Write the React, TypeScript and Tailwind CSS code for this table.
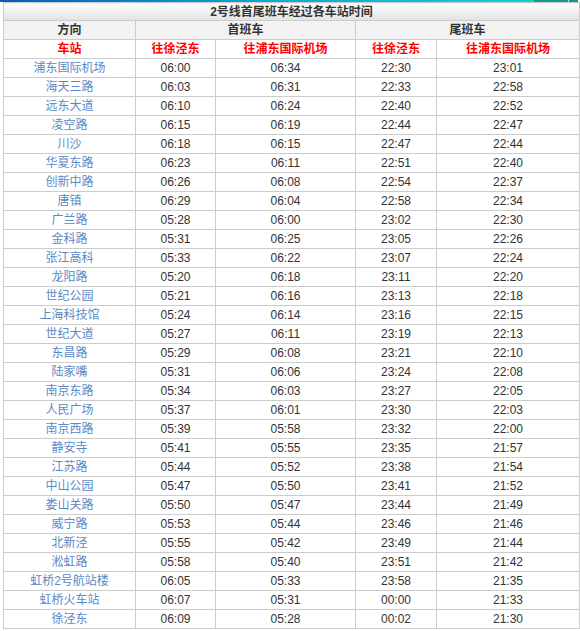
import React from "react";

const rows: [string, string, string, string, string][] = [
  ["浦东国际机场", "06:00", "06:34", "22:30", "23:01"],
  ["海天三路", "06:03", "06:31", "22:33", "22:58"],
  ["远东大道", "06:10", "06:24", "22:40", "22:52"],
  ["凌空路", "06:15", "06:19", "22:44", "22:47"],
  ["川沙", "06:18", "06:15", "22:47", "22:44"],
  ["华夏东路", "06:23", "06:11", "22:51", "22:40"],
  ["创新中路", "06:26", "06:08", "22:54", "22:37"],
  ["唐镇", "06:29", "06:04", "22:58", "22:34"],
  ["广兰路", "05:28", "06:00", "23:02", "22:30"],
  ["金科路", "05:31", "06:25", "23:05", "22:26"],
  ["张江高科", "05:33", "06:22", "23:07", "22:24"],
  ["龙阳路", "05:20", "06:18", "23:11", "22:20"],
  ["世纪公园", "05:21", "06:16", "23:13", "22:18"],
  ["上海科技馆", "05:24", "06:14", "23:16", "22:15"],
  ["世纪大道", "05:27", "06:11", "23:19", "22:13"],
  ["东昌路", "05:29", "06:08", "23:21", "22:10"],
  ["陆家嘴", "05:31", "06:06", "23:24", "22:08"],
  ["南京东路", "05:34", "06:03", "23:27", "22:05"],
  ["人民广场", "05:37", "06:01", "23:30", "22:03"],
  ["南京西路", "05:39", "05:58", "23:32", "22:00"],
  ["静安寺", "05:41", "05:55", "23:35", "21:57"],
  ["江苏路", "05:44", "05:52", "23:38", "21:54"],
  ["中山公园", "05:47", "05:50", "23:41", "21:52"],
  ["娄山关路", "05:50", "05:47", "23:44", "21:49"],
  ["威宁路", "05:53", "05:44", "23:46", "21:46"],
  ["北新泾", "05:55", "05:42", "23:49", "21:44"],
  ["淞虹路", "05:58", "05:40", "23:51", "21:42"],
  ["虹桥2号航站楼", "06:05", "05:33", "23:58", "21:35"],
  ["虹桥火车站", "06:07", "05:31", "00:00", "21:33"],
  ["徐泾东", "06:09", "05:28", "00:02", "21:30"],
];

const font = { fontFamily: '"Liberation Sans", "Noto Sans CJK SC", sans-serif' };

export default function App() {
  return (
    <div className="w-[580px] h-[631px] bg-white overflow-hidden" style={font}>
      <div className="flex h-[2px] w-[578px]">
        <div className="flex-1 bg-gradient-to-r from-[#0b5cb3] via-[#10a8d0] to-[#12d0d2]" />
        <div className="w-[34px] bg-[#0f9a86]" />
        <div className="w-[1px] bg-[#b8d8d4]" />
        <div className="w-[9px] bg-[#0f9a86]" />
      </div>
      <div className="pl-[3px]">
        <table className="table-fixed border-collapse w-[576px] text-[12px] text-[#333] text-center">
          <colgroup>
            <col className="w-[132px]" />
            <col className="w-[80px]" />
            <col className="w-[140px]" />
            <col className="w-[81px]" />
            <col className="w-[143px]" />
          </colgroup>
          <tbody>
            <tr>
              <td
                colSpan={5}
                className="h-[18px] p-0 border border-[#cccccc] bg-gradient-to-b from-[#ffffff] to-[#e2e2e2] font-bold leading-none"
              >
                2号线首尾班车经过各车站时间
              </td>
            </tr>
            <tr className="bg-[#f2f2f2] font-bold">
              <td className="h-[19px] p-0 border border-[#cccccc] leading-none">方向</td>
              <td colSpan={2} className="h-[19px] p-0 border border-[#cccccc] leading-none">首班车</td>
              <td colSpan={2} className="h-[19px] p-0 border border-[#cccccc] leading-none">尾班车</td>
            </tr>
            <tr className="font-bold text-[#ff0000]">
              <td className="h-[19px] p-0 border border-[#cccccc] leading-none">车站</td>
              <td className="h-[19px] p-0 border border-[#cccccc] leading-none">往徐泾东</td>
              <td className="h-[19px] p-0 border border-[#cccccc] leading-none">往浦东国际机场</td>
              <td className="h-[19px] p-0 border border-[#cccccc] leading-none">往徐泾东</td>
              <td className="h-[19px] p-0 border border-[#cccccc] leading-none">往浦东国际机场</td>
            </tr>
            {rows.map((r) => (
              <tr key={r[0]}>
                <td className="h-[19px] p-0 border border-[#cccccc] leading-none text-[#5a8ac6]">{r[0]}</td>
                <td className="h-[19px] p-0 border border-[#cccccc] leading-none">{r[1]}</td>
                <td className="h-[19px] p-0 border border-[#cccccc] leading-none">{r[2]}</td>
                <td className="h-[19px] p-0 border border-[#cccccc] leading-none">{r[3]}</td>
                <td className="h-[19px] p-0 border border-[#cccccc] leading-none">{r[4]}</td>
              </tr>
            ))}
          </tbody>
        </table>
      </div>
    </div>
  );
}
